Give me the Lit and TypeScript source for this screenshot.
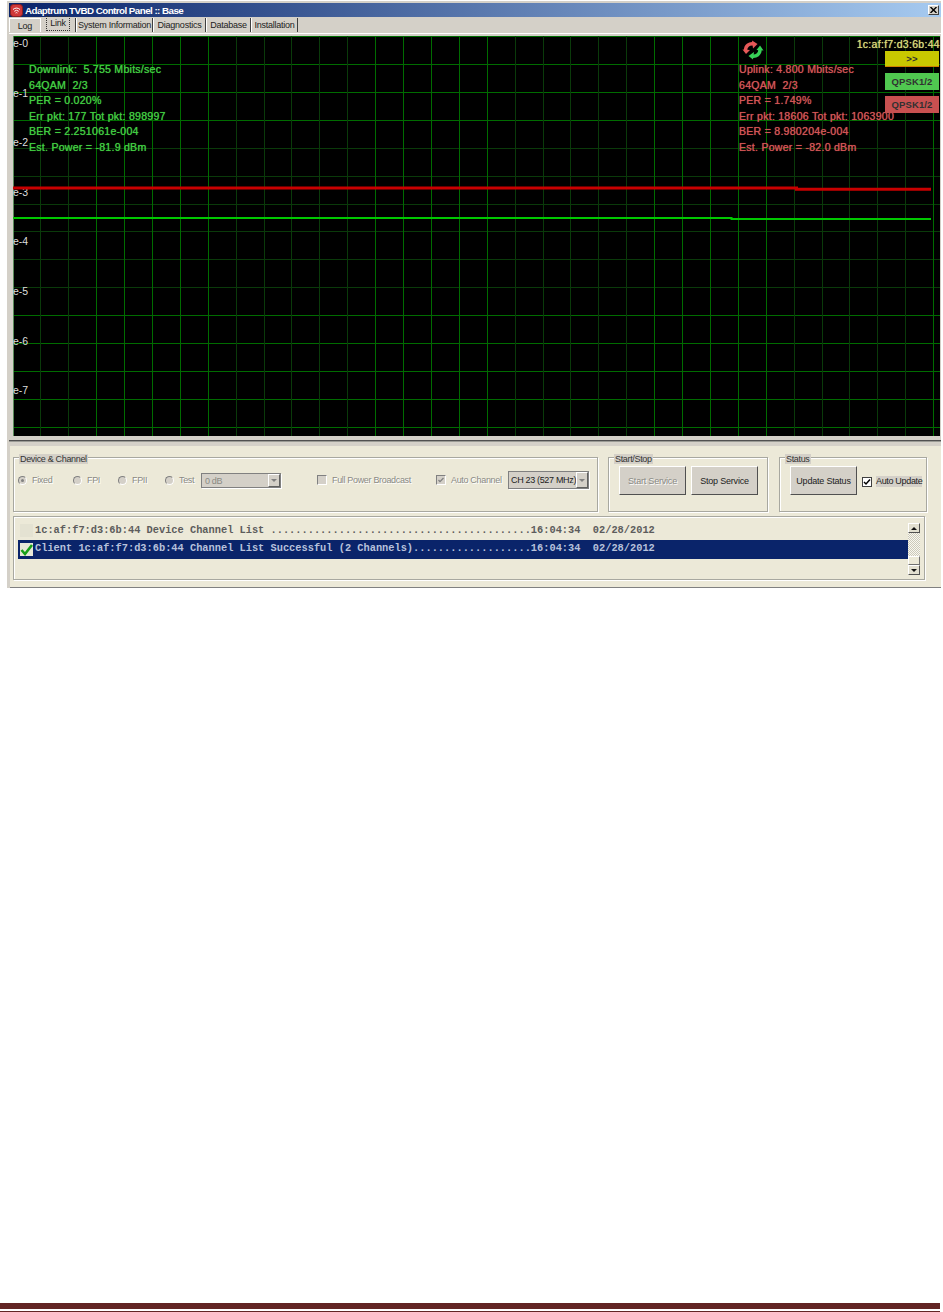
import { LitElement, html, css, svg } from "lit";
import { customElement } from "lit/decorators.js";

const VX = [40,68,96,124,152,180,208,236,264,291,319,347,375,403,431,459,487,515,543,570,598,626,654,682,710,738,766,794,822,849,877,905,933];
const VBRIGHT = new Set([96,124,152,180,208,375,403,431,459,487,654,682,710,738,766,933]);
const HY = [36,64,92,120,148,176,204,231,259,287,315,343,371,399,427];
const HBRIGHT = new Set([36,64,92,120,315,343,371,399,427]);
const PX = 13, PY = 36;
const DB = ["e-0","e-1","e-2","e-3","e-4","e-5","e-6","e-7","e-8"];
const DOWN = ["Downlink:  5.755 Mbits/sec","64QAM  2/3","PER = 0.020%","Err pkt: 177 Tot pkt: 898997","BER = 2.251061e-004","Est. Power = -81.9 dBm"];
const UP = ["Uplink: 4.800 Mbits/sec","64QAM  2/3","PER = 1.749%","Err pkt: 18606 Tot pkt: 1063900","BER = 8.980204e-004","Est. Power = -82.0 dBm"];
const TABS = [["Log",31],["Link",36],["System Information",77],["Diagnostics",53],["Database",45],["Installation",47]] as const;

@customElement("app-root")
export class AppRoot extends LitElement {
  static styles = css`
    :host { display: block; width: 943px; height: 1312px; position: relative; background: #fff; overflow: hidden;
      font-family: "Liberation Sans", Arial, sans-serif; font-size: 9px; letter-spacing: -.33px; color: #111; }
    .window { width: 932px; margin: 1px 0 0 7px; padding: 2px 0 0 2px; background: #d4d0c8; box-sizing: content-box; }
    .title { height: 14px; display: flex; align-items: center; gap: 2px; padding-left: 1px;
      background: linear-gradient(90deg, #0a246a, #a6caf0); color: #fff; font-weight: 700; font-size: 9.8px; letter-spacing: -.55px; }
    .appicon { width: 13px; height: 13px; display: block; }
    .name { flex: 1; white-space: nowrap; }
    .close { width: 11px; height: 10px; margin-right: 2px; background: #d4d0c8; border: 1px solid; border-color: #fff #404040 #404040 #fff;
      box-sizing: border-box; display: flex; align-items: center; justify-content: center; }
    .close svg { width: 7px; height: 6px; display: block; }
    .tabs { height: 16px; display: flex; align-items: center; }
    .tab { height: 14px; display: flex; align-items: center; justify-content: center; box-sizing: border-box;
      border-right: 1px solid #404040; border-left: 1px solid #fff; font-size: 9px; letter-spacing: -.25px; color: #222; white-space: nowrap; }
    .tab.first { border-right: none; border-top: 1px solid #fff; }
    .tab.focus span { outline: 1px dotted #333; padding: 1px 3px 2px; margin-top: -3px; }
    .sep { height: 3px; background: linear-gradient(#fff 0 1px, #d4d0c8 1px); }
    .plot { position: relative; width: 927px; height: 400px; margin-left: 4px; background: #000; overflow: hidden; letter-spacing: 0; }
    .layer { position: absolute; left: 0; top: 0; width: 100%; height: 100%; display: block; }
    .db { position: absolute; left: 0; color: #ddd; font-size: 10.5px; line-height: 12px; }
    .stats { position: absolute; top: 26px; font-size: 10.6px; letter-spacing: .24px; line-height: 15.55px; white-space: pre;
      text-shadow: 0 0 .7px currentColor; }
    .stats.down { left: 16px; color: #40cc40; }
    .stats.up { left: 726px; color: #d25454; }
    .mac { position: absolute; right: 0; top: 2px; color: #d8d878; font-size: 10.5px; letter-spacing: .3px; line-height: 13px; text-shadow: 0 0 .7px currentColor; white-space: nowrap; }
    .badge { position: absolute; left: 872px; width: 54px; display: flex; align-items: center; justify-content: center;
      font-size: 9.5px; letter-spacing: .1px; color: #303030; font-weight: 700; }
    .b1 { top: 15px; height: 16px; background: #c8c800; border-bottom: 1px solid #d08000; box-sizing: border-box; }
    .b2 { top: 37px; height: 17px; background: #50c850; }
    .b3 { top: 60px; height: 17px; background: #c85050; }
    .refresh { position: absolute; left: 729px; top: 4px; width: 22px; height: 20px; display: block; }
    .divider { height: 10px; background: linear-gradient(#d4d0c8 0 4px, #505050 4px 5px, #9a9a94 5px 6px, #d4d0c8 6px); }
    .panel { margin-left: 1px; background: #ece9d8; padding: 11px 0 7px 3px; display: flex; flex-direction: column; gap: 4px;
      border-bottom: 1px solid #808080; }
    .groups { display: flex; gap: 10px; }
    .group { position: relative; box-sizing: border-box; height: 55px; border: 1px solid #a8a8a0;
      box-shadow: 1px 1px 0 #fff, inset 1px 1px 0 #fff; }
    .device { width: 585px; padding: 13px 0 0 4px; display: flex; align-items: flex-start; }
    .device > * { flex: none; }
    .start { width: 160px; display: flex; gap: 5px; padding: 8px 0 0 10px; }
    .status { width: 148px; margin-left: 1px; display: flex; padding: 8px 0 0 10px; }
    .legend { position: absolute; top: -4px; left: 5px; height: 10px; line-height: 10px; padding: 0 1px; background: #d4d0c8; color: #333; white-space: nowrap; }
    .opt { display: flex; align-items: center; gap: 5px; color: #8a8a84; text-shadow: 1px 1px 0 #fff; height: 18px; white-space: nowrap; }
    .radio { width: 9px; height: 9px; border-radius: 50%; background: #d4d0c8; box-sizing: border-box; border: 1px solid #808080;
      border-right-color: #fff; border-bottom-color: #fff; display: flex; align-items: center; justify-content: center; flex: none; }
    .radio i { width: 3px; height: 3px; border-radius: 50%; background: #808080; }
    .check { width: 10px; height: 10px; box-sizing: border-box; border: 1px solid #808080; border-right-color: #fff; border-bottom-color: #fff;
      background: #d4d0c8; display: block; flex: none; }
    .w55 { width: 55px; } .w44 { width: 45px; } .w46 { width: 47px; } .w38 { width: 36px; }
    .w119 { width: 119px; } .w72 { width: 72px; }
    .gap36 { width: 36px; }
    .select { box-sizing: border-box; display: flex; align-items: center; background: #d4d0c8; border: 1px solid #808080;
      box-shadow: 1px 1px 0 #fff; }
    .select.off { width: 80px; height: 15px; color: #8a8a84; padding-left: 3px; margin-top: 2px; }
    .select.on { width: 81px; height: 18px; color: #222; padding-left: 2px; }
    .select span { flex: 1; white-space: nowrap; }
    .arrow { width: 12px; align-self: stretch; box-sizing: border-box; background: #d4d0c8; border: 1px solid; border-color: #fff #606060 #606060 #fff;
      display: flex; align-items: center; justify-content: center; flex: none; }
    .arrow::after { content: ""; border: 3px solid transparent; border-top: 3px solid #808080; border-bottom: 0; }
    .btn { width: 67px; height: 29px; box-sizing: border-box; display: flex; align-items: center; justify-content: center;
      background: #d4d0c8; border: 1px solid; border-color: #fff #505050 #505050 #fff; color: #222; white-space: nowrap; letter-spacing: -.2px; }
    .btn.off { color: #8a8a84; text-shadow: 1px 1px 0 #fff; }
    .auto { display: flex; align-items: center; gap: 4px; margin: 10px 0 0 5px; height: 11px; }
    .auto .box { width: 10px; height: 10px; background: #fff; border: 1px solid #404040; box-sizing: border-box; display: block; }
    .auto span { background: #d4d0c8; line-height: 11px; color: #222; white-space: nowrap; }
    .list { box-sizing: border-box; width: 912px; height: 64px; border: 1px solid #a8a8a0; box-shadow: 1px 1px 0 #fff, inset 1px 1px 0 #fff;
      display: flex; padding: 6px 0 0 4px; }
    .rows { width: 890px; flex: none; }
    .row { display: flex; align-items: center; height: 17px; font-family: "Liberation Mono", monospace; font-size: 10.33px; font-weight: 700;
      letter-spacing: 0; white-space: pre; color: #5c5c5c; padding-left: 2px; gap: 2px; }
    .row span:last-child { margin-top: -3px; }
    .row.sel { height: 19px; background: #0a246a; color: #b8c2dc; }
    .ico { width: 13px; height: 13px; flex: none; display: block; background: #e4e2d2; }
    .row:first-child .ico { margin-top: -3px; }
    .row.sel .ico { background: #e8e8d8; }
    .scroll { width: 12px; height: 52px; display: flex; flex-direction: column; }
    .sb { height: 10px; box-sizing: border-box; background: #e2dfd0; border: 1px solid; border-color: #fff #505050 #505050 #fff; display: flex; align-items: center; justify-content: center; flex: none; }
    .sb.u::after { content: ""; border: 3px solid transparent; border-bottom: 3px solid #111; border-top: 0; }
    .sb.d::after { content: ""; border: 3px solid transparent; border-top: 3px solid #111; border-bottom: 0; }
    .track { height: 23px; background: repeating-conic-gradient(#ccc9ba 0 25%, #f8f7f0 0 50%) 0 0 / 2px 2px; flex: none; }
    .thumb { height: 9px; box-sizing: border-box; background: #ece9d8; border: 1px solid; border-color: #fff #707070 #707070 #fff; flex: none; }
    .footer { position: absolute; left: 0; top: 1303px; width: 940px; height: 9px; box-sizing: border-box;
      border-top: 6px solid #622423; border-bottom: 1px solid #622423; }
  `;

  private grid() {
    const W = 927, H = 400;
    return svg`
      ${HY.map(y => svg`<line x1="0" x2="${W}" y1="${y - PY + .5}" y2="${y - PY + .5}" stroke="${HBRIGHT.has(y) ? "#006c00" : "#0a3a0a"}"/>`)}
      ${VX.map(x => svg`<line y1="0" y2="${H}" x1="${x - PX + .5}" x2="${x - PX + .5}" stroke="${VBRIGHT.has(x) ? "#006c00" : "#0a3a0a"}"/>`)}
      <line x1=".5" x2=".5" y1="0" y2="${H}" stroke="#5a8a5a"/>
    `;
  }

  private traces() {
    return svg`
      <path d="M0 152H783.5V153.3H918" fill="none" stroke="#c80000" stroke-width="3"/>
      <path d="M0 182H718.5V183H918" fill="none" stroke="#00c800" stroke-width="2"/>
    `;
  }

  render() {
    return html`
      <div class="window">
        <div class="title">
          <svg class="appicon" viewBox="0 0 13 13">
            <rect x=".5" y=".5" width="12" height="12" rx="3" fill="#d03838" stroke="#8a2020"/>
            <path d="M3 5.5a5 5 0 0 1 7 0M4.3 7.3a3.2 3.2 0 0 1 4.4 0M5.6 9a1.4 1.4 0 0 1 1.8 0" fill="none" stroke="#fff" stroke-width="1"/>
          </svg>
          <span class="name">Adaptrum TVBD Control Panel :: Base</span>
          <div class="close"><svg viewBox="0 0 7 6"><path d="M.5 0L6.5 6M6.5 0L.5 6" stroke="#000" stroke-width="1.4"/></svg></div>
        </div>
        <div class="tabs">
          ${TABS.map(([t, w], i) => html`<div class="tab ${i === 0 ? "first" : ""} ${i === 1 ? "focus" : ""}" style="width:${w}px"><span>${t}</span></div>`)}
        </div>
        <div class="sep"></div>
        <div class="plot">
          <svg class="layer" viewBox="0 0 927 400">${this.grid()}</svg>
          ${DB.map((d, i) => html`<div class="db" style="top:${i * 49.6 + 1}px">${d}</div>`)}
          <svg class="layer" viewBox="0 0 927 400">${this.traces()}</svg>
          <div class="stats down">${DOWN.join("\n")}</div>
          <div class="stats up">${UP.join("\n")}</div>
          <svg class="refresh" viewBox="0 0 22 20">
            <path d="M3.5 10.5C3.5 6 7 3 12 4" fill="none" stroke="#e85858" stroke-width="3.4"/>
            <path d="M10 .5L15.5 4L11 8.5Z" fill="#e85858"/>
            <path d="M.5 9.5L4 14L8 10Z" fill="#e85858"/>
            <path d="M18 9.5C18 14 14.5 17 9.5 16" fill="none" stroke="#38d058" stroke-width="3.4"/>
            <path d="M12 12L6.5 16L11 19.5Z" fill="#38d058"/>
            <path d="M14.5 10L18 5.5L21.5 10.5Z" fill="#38d058"/>
          </svg>
          <div class="mac">1c:af:f7:d3:6b:44</div>
          <div class="badge b1">&gt;&gt;</div>
          <div class="badge b2">QPSK1/2</div>
          <div class="badge b3">QPSK1/2</div>
        </div>
        <div class="divider"></div>
        <div class="panel">
          <div class="groups">
            <div class="group device">
              <span class="legend">Device &amp; Channel</span>
              <div class="opt w55"><span class="radio"><i></i></span>Fixed</div>
              <div class="opt w44"><span class="radio"></span>FPI</div>
              <div class="opt w46"><span class="radio"></span>FPII</div>
              <div class="opt w38"><span class="radio"></span>Test</div>
              <div class="select off"><span>0 dB</span><i class="arrow"></i></div>
              <div class="gap36"></div>
              <div class="opt w119"><span class="check"></span>Full Power Broadcast</div>
              <div class="opt w72">
                <svg class="check" viewBox="0 0 8 8"><path d="M1.5 4L3 5.6L6.5 2" fill="none" stroke="#808080" stroke-width="1.3"/></svg>Auto Channel
              </div>
              <div class="select on"><span>CH 23 (527 MHz)</span><i class="arrow"></i></div>
            </div>
            <div class="group start">
              <span class="legend">Start/Stop</span>
              <div class="btn off">Start Service</div>
              <div class="btn">Stop Service</div>
            </div>
            <div class="group status">
              <span class="legend">Status</span>
              <div class="btn">Update Status</div>
              <div class="auto">
                <svg class="box" viewBox="0 0 8 8"><path d="M1 4L3 6L7 1.5" fill="none" stroke="#000" stroke-width="1.5"/></svg>
                <span>Auto Update</span>
              </div>
            </div>
          </div>
          <div class="list">
            <div class="rows">
              <div class="row"><span class="ico"></span><span>1c:af:f7:d3:6b:44 Device Channel List ${".".repeat(42)}16:04:34  02/28/2012</span></div>
              <div class="row sel">
                <svg class="ico" viewBox="0 0 13 13"><path d="M1.5 7L5 11L12 2" fill="none" stroke="#18a018" stroke-width="2.6"/></svg>
                <span>Client 1c:af:f7:d3:6b:44 Channel List Successful (2 Channels)${".".repeat(19)}16:04:34  02/28/2012</span>
              </div>
            </div>
            <div class="scroll">
              <div class="sb u"></div>
              <div class="track"></div>
              <div class="thumb"></div>
              <div class="sb d"></div>
            </div>
          </div>
        </div>
      </div>
      <div class="footer"></div>
    `;
  }
}
